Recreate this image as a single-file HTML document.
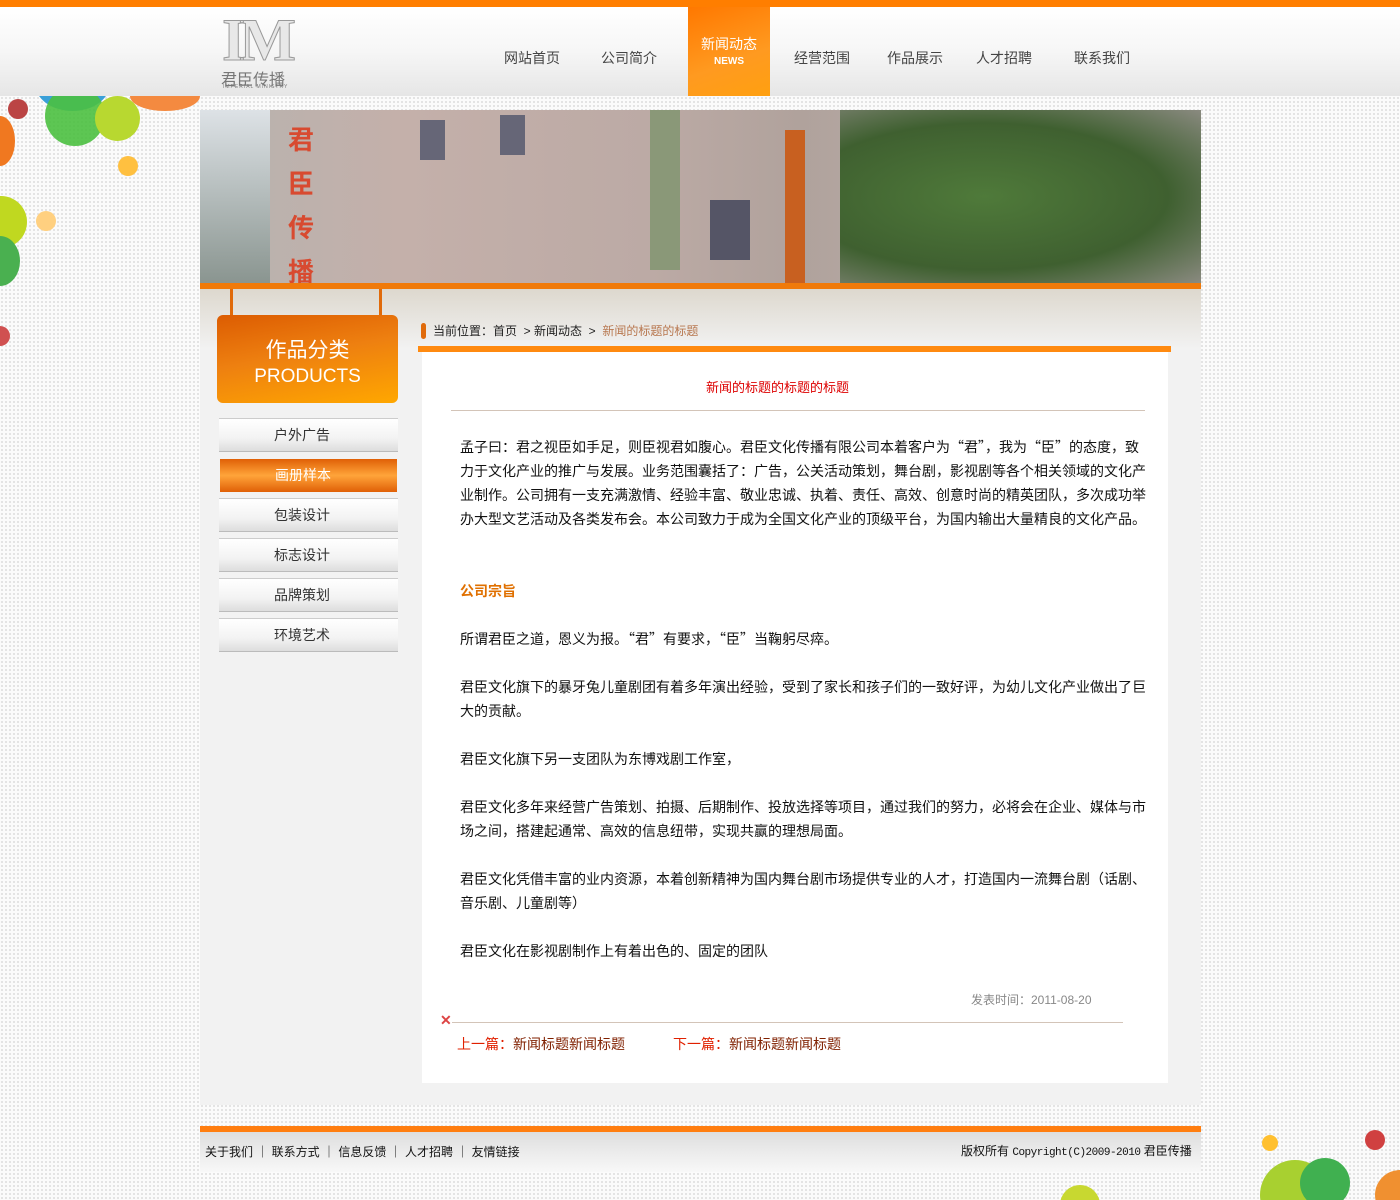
<!DOCTYPE html>
<html><head><meta charset="utf-8">
<style>
*{margin:0;padding:0;box-sizing:border-box}
body{width:1400px;height:1200px;overflow:hidden;position:relative;font-family:"Liberation Sans","Noto Sans CJK SC","WenQuanYi Zen Hei",sans-serif;
background-color:#fbfbfb;background-image:radial-gradient(#e2e2e2 1px,transparent 1.2px);background-size:4px 4px;color:#222}
.abs{position:absolute}
#top{left:0;top:0;width:1400px;height:7px;background:#ff7e00}
#hdr{left:0;top:7px;width:1400px;height:89px;background:linear-gradient(#fff,#f6f6f6 50%,#e6e6e6)}
.nav{top:48px;font-size:14px;color:#444}
#news{left:688px;top:7px;width:82px;height:89px;background:linear-gradient(160deg,#ff7800,#ff9a20 60%,#ffa010);color:#fff;text-align:center}
.circ{position:absolute;border-radius:50%}
#main{left:200px;top:110px;width:1001px;height:995px;background:#f2f2f2}
#banner{left:200px;top:110px;width:1001px;height:173px;overflow:hidden;background:linear-gradient(90deg,#c8cdd0 0,#b9b2ae 4%,#c4b0aa 20%,#bcaaa5 45%,#b0a29c 60%,#b5a9a4 70%,#6e6e55 80%,#4d6a35 85%,#5a7a40 95%,#a8a8a0 100%)}
#oline{left:200px;top:283px;width:1001px;height:6px;background:#f07a0a}
#grad{left:200px;top:289px;width:1001px;height:60px;background:linear-gradient(#ddd8ce,#f2f2f2)}
#prod{left:217px;top:315px;width:181px;height:88px;border-radius:6px;background:linear-gradient(170deg,#dc5c02,#ee8010 45%,#ffa700);color:#fff;text-align:center}
.menu{left:219px;width:179px;height:34px;background:linear-gradient(#fff,#f3f3f3 60%,#ddd);border-top:1px solid #ccc;border-bottom:1px solid #bbb;font-size:14px;color:#333;padding-left:55px;line-height:33px}
.menu.on{background:linear-gradient(#e06006,#ffa43a 50%,#e06006);color:#fff;border:none}
#crumb{left:420px;top:322px;font-size:12px;color:#222}
#cbar{left:418px;top:346px;width:753px;height:6px;background:#ff8a10}
#box{left:422px;top:352px;width:746px;height:731px;background:#fff}
.p{position:absolute;left:460px;width:688px;font-size:14px;line-height:24px;color:#111;font-family:"Noto Sans CJK SC","WenQuanYi Zen Hei",sans-serif}
#foot{left:200px;top:1126px;width:1001px;height:6px;background:#ff7e10}
#foot2{left:200px;top:1132px;width:1001px;height:40px;background:linear-gradient(#dedede,#f8f8f8)}
</style></head><body>
<div class="abs" id="top"></div>
<div class="abs" id="hdr"></div>
<div class="abs" style="left:222px;top:12px;font-family:'Liberation Serif',serif;font-size:60px;line-height:56px;letter-spacing:-6px;font-weight:bold;-webkit-text-stroke:1px #999;color:#e8e8e8">IM</div>
<div class="abs" style="left:221px;top:66px;font-size:16px;color:#777;letter-spacing:0">君臣传播</div>
<div class="abs" style="left:223px;top:84px;font-size:5px;color:#777;letter-spacing:1px">IMPERIAL MINISTRY</div>
<div class="abs nav" style="left:504px">网站首页</div>
<div class="abs nav" style="left:601px">公司简介</div>
<div class="abs" id="news"><div style="font-size:14px;margin-top:27px">新闻动态</div><div style="font-size:10px;font-weight:bold;margin-top:2px">NEWS</div></div>
<div class="abs nav" style="left:794px">经营范围</div>
<div class="abs nav" style="left:887px">作品展示</div>
<div class="abs nav" style="left:976px">人才招聘</div>
<div class="abs nav" style="left:1074px">联系我们</div>
<div class="abs" style="left:0;top:96px;width:200px;height:280px;overflow:hidden">
<div class="circ" style="left:35px;top:-40px;width:75px;height:55px;background:#3aa0d8"></div>
<div class="circ" style="left:45px;top:-10px;width:60px;height:60px;background:#4bc040;opacity:.9"></div>
<div class="circ" style="left:95px;top:0;width:45px;height:45px;background:#b8d830"></div>
<div class="circ" style="left:130px;top:-15px;width:70px;height:30px;background:#f48a40"></div>
<div class="circ" style="left:8px;top:3px;width:20px;height:20px;background:#b44"></div>
<div class="circ" style="left:-15px;top:20px;width:30px;height:50px;background:#f07820"></div>
<div class="circ" style="left:118px;top:60px;width:20px;height:20px;background:#ffc040"></div>
<div class="circ" style="left:-25px;top:100px;width:52px;height:52px;background:#c0d820"></div>
<div class="circ" style="left:-20px;top:140px;width:40px;height:50px;background:#4ab050"></div>
<div class="circ" style="left:36px;top:115px;width:20px;height:20px;background:#ffd080"></div>
<div class="circ" style="left:-10px;top:230px;width:20px;height:20px;background:#d05050"></div>
</div>
<div class="abs" style="left:1200px;top:1130px;width:200px;height:70px;overflow:hidden">
<div class="circ" style="left:62px;top:5px;width:16px;height:16px;background:#ffc030"></div>
<div class="circ" style="left:60px;top:30px;width:70px;height:70px;background:#a8d030"></div>
<div class="circ" style="left:100px;top:28px;width:50px;height:50px;background:#40b050"></div>
<div class="circ" style="left:165px;top:0px;width:20px;height:20px;background:#d04040"></div>
<div class="circ" style="left:175px;top:40px;width:50px;height:50px;background:#f09030"></div>
</div>
<div class="abs" style="left:1050px;top:1180px;width:150px;height:20px;overflow:hidden">
<div class="circ" style="left:10px;top:5px;width:40px;height:40px;background:#c8d830"></div>
</div>
<div class="abs" id="main"></div>
<div class="abs" id="banner">
 <div class="abs" style="left:0;top:0;width:70px;height:173px;background:linear-gradient(#dde2e6,#8a9590)"></div>
 <div class="abs" style="left:88px;top:8px;color:#d84a30;font-size:26px;line-height:44px;width:30px;font-weight:bold">君臣传播</div>
 <div class="abs" style="left:450px;top:0;width:30px;height:160px;background:#8a9878"></div>
 <div class="abs" style="left:585px;top:20px;width:20px;height:153px;background:#c86020"></div>
 <div class="abs" style="left:640px;top:0;width:361px;height:173px;background:radial-gradient(ellipse at 40% 50%,#4f7a3a,#3f6030 60%,#8a8a80)"></div>
 <div class="abs" style="left:220px;top:10px;width:25px;height:40px;background:#667"></div>
 <div class="abs" style="left:300px;top:5px;width:25px;height:40px;background:#667"></div>
 <div class="abs" style="left:510px;top:90px;width:40px;height:60px;background:#556"></div>
</div>
<div class="abs" id="oline"></div>
<div class="abs" id="grad"></div>
<div class="abs" style="left:230px;top:289px;width:3px;height:26px;background:#e06a0a"></div>
<div class="abs" style="left:379px;top:289px;width:3px;height:26px;background:#e06a0a"></div>
<div class="abs" id="prod"><div style="font-size:21px;margin-top:19px">作品分类</div><div style="font-size:19px;margin-top:2px">PRODUCTS</div></div>
<div class="abs menu" style="top:418px">户外广告</div>
<div class="abs menu on" style="top:459px;left:220px;width:177px;height:33px">画册样本</div>
<div class="abs menu" style="top:498px">包装设计</div>
<div class="abs menu" style="top:538px">标志设计</div>
<div class="abs menu" style="top:578px">品牌策划</div>
<div class="abs menu" style="top:618px">环境艺术</div>
<div class="abs" style="left:421px;top:323px;width:5px;height:16px;border-radius:3px;background:#e06a0a"></div>
<div class="abs" id="crumb" style="left:433px">当前位置：首页 &nbsp;&gt; 新闻动态 &nbsp;&gt; &nbsp;<span style="color:#b87850">新闻的标题的标题</span></div>
<div class="abs" id="cbar"></div>
<div class="abs" id="box"></div>
<div class="abs" style="left:706px;top:377px;font-size:13px;color:#d00">新闻的标题的标题的标题</div>
<div class="abs" style="left:451px;top:410px;width:694px;height:1px;background:#d3c4b8"></div>
<div class="p" style="top:435px">孟子曰：君之视臣如手足，则臣视君如腹心。君臣文化传播有限公司本着客户为“君”，我为“臣”的态度，致力于文化产业的推广与发展。业务范围囊括了：广告，公关活动策划，舞台剧，影视剧等各个相关领域的文化产业制作。公司拥有一支充满激情、经验丰富、敬业忠诚、执着、责任、高效、创意时尚的精英团队，多次成功举办大型文艺活动及各类发布会。本公司致力于成为全国文化产业的顶级平台，为国内输出大量精良的文化产品。</div>
<div class="p" style="top:579px;color:#e07000;font-weight:bold">公司宗旨</div>
<div class="p" style="top:627px">所谓君臣之道，恩义为报。“君”有要求，“臣”当鞠躬尽瘁。</div>
<div class="p" style="top:675px">君臣文化旗下的暴牙兔儿童剧团有着多年演出经验，受到了家长和孩子们的一致好评，为幼儿文化产业做出了巨大的贡献。</div>
<div class="p" style="top:747px">君臣文化旗下另一支团队为东博戏剧工作室，</div>
<div class="p" style="top:795px">君臣文化多年来经营广告策划、拍摄、后期制作、投放选择等项目，通过我们的努力，必将会在企业、媒体与市场之间，搭建起通常、高效的信息纽带，实现共赢的理想局面。</div>
<div class="p" style="top:867px">君臣文化凭借丰富的业内资源，本着创新精神为国内舞台剧市场提供专业的人才，打造国内一流舞台剧（话剧、音乐剧、儿童剧等）</div>
<div class="p" style="top:939px">君臣文化在影视剧制作上有着出色的、固定的团队</div>
<div class="abs" style="left:971px;top:991px;font-size:12px;color:#888">发表时间：2011-08-20</div>
<div class="abs" style="left:440px;top:1012px;font-size:14px;color:#d44;font-weight:bold">✕</div>
<div class="abs" style="left:452px;top:1022px;width:671px;height:1px;background:#d3c4b8"></div>
<div class="abs" style="left:457px;top:1034px;font-size:14px;color:#e02000">上一篇：<span style="color:#802000">新闻标题新闻标题</span></div>
<div class="abs" style="left:673px;top:1034px;font-size:14px;color:#e02000">下一篇：<span style="color:#802000">新闻标题新闻标题</span></div>
<div class="abs" id="foot"></div>
<div class="abs" id="foot2"></div>
<div class="abs" style="left:205px;top:1143px;font-size:12px;color:#111">关于我们 ｜ 联系方式 ｜ 信息反馈 ｜ 人才招聘 ｜ 友情链接</div>
<div class="abs" style="left:961px;top:1142px;font-size:12px;color:#111">版权所有 <span style="font-family:'Liberation Mono',monospace;font-size:11px;letter-spacing:-0.5px">Copyright(C)2009-2010</span> 君臣传播</div>
</body></html>
